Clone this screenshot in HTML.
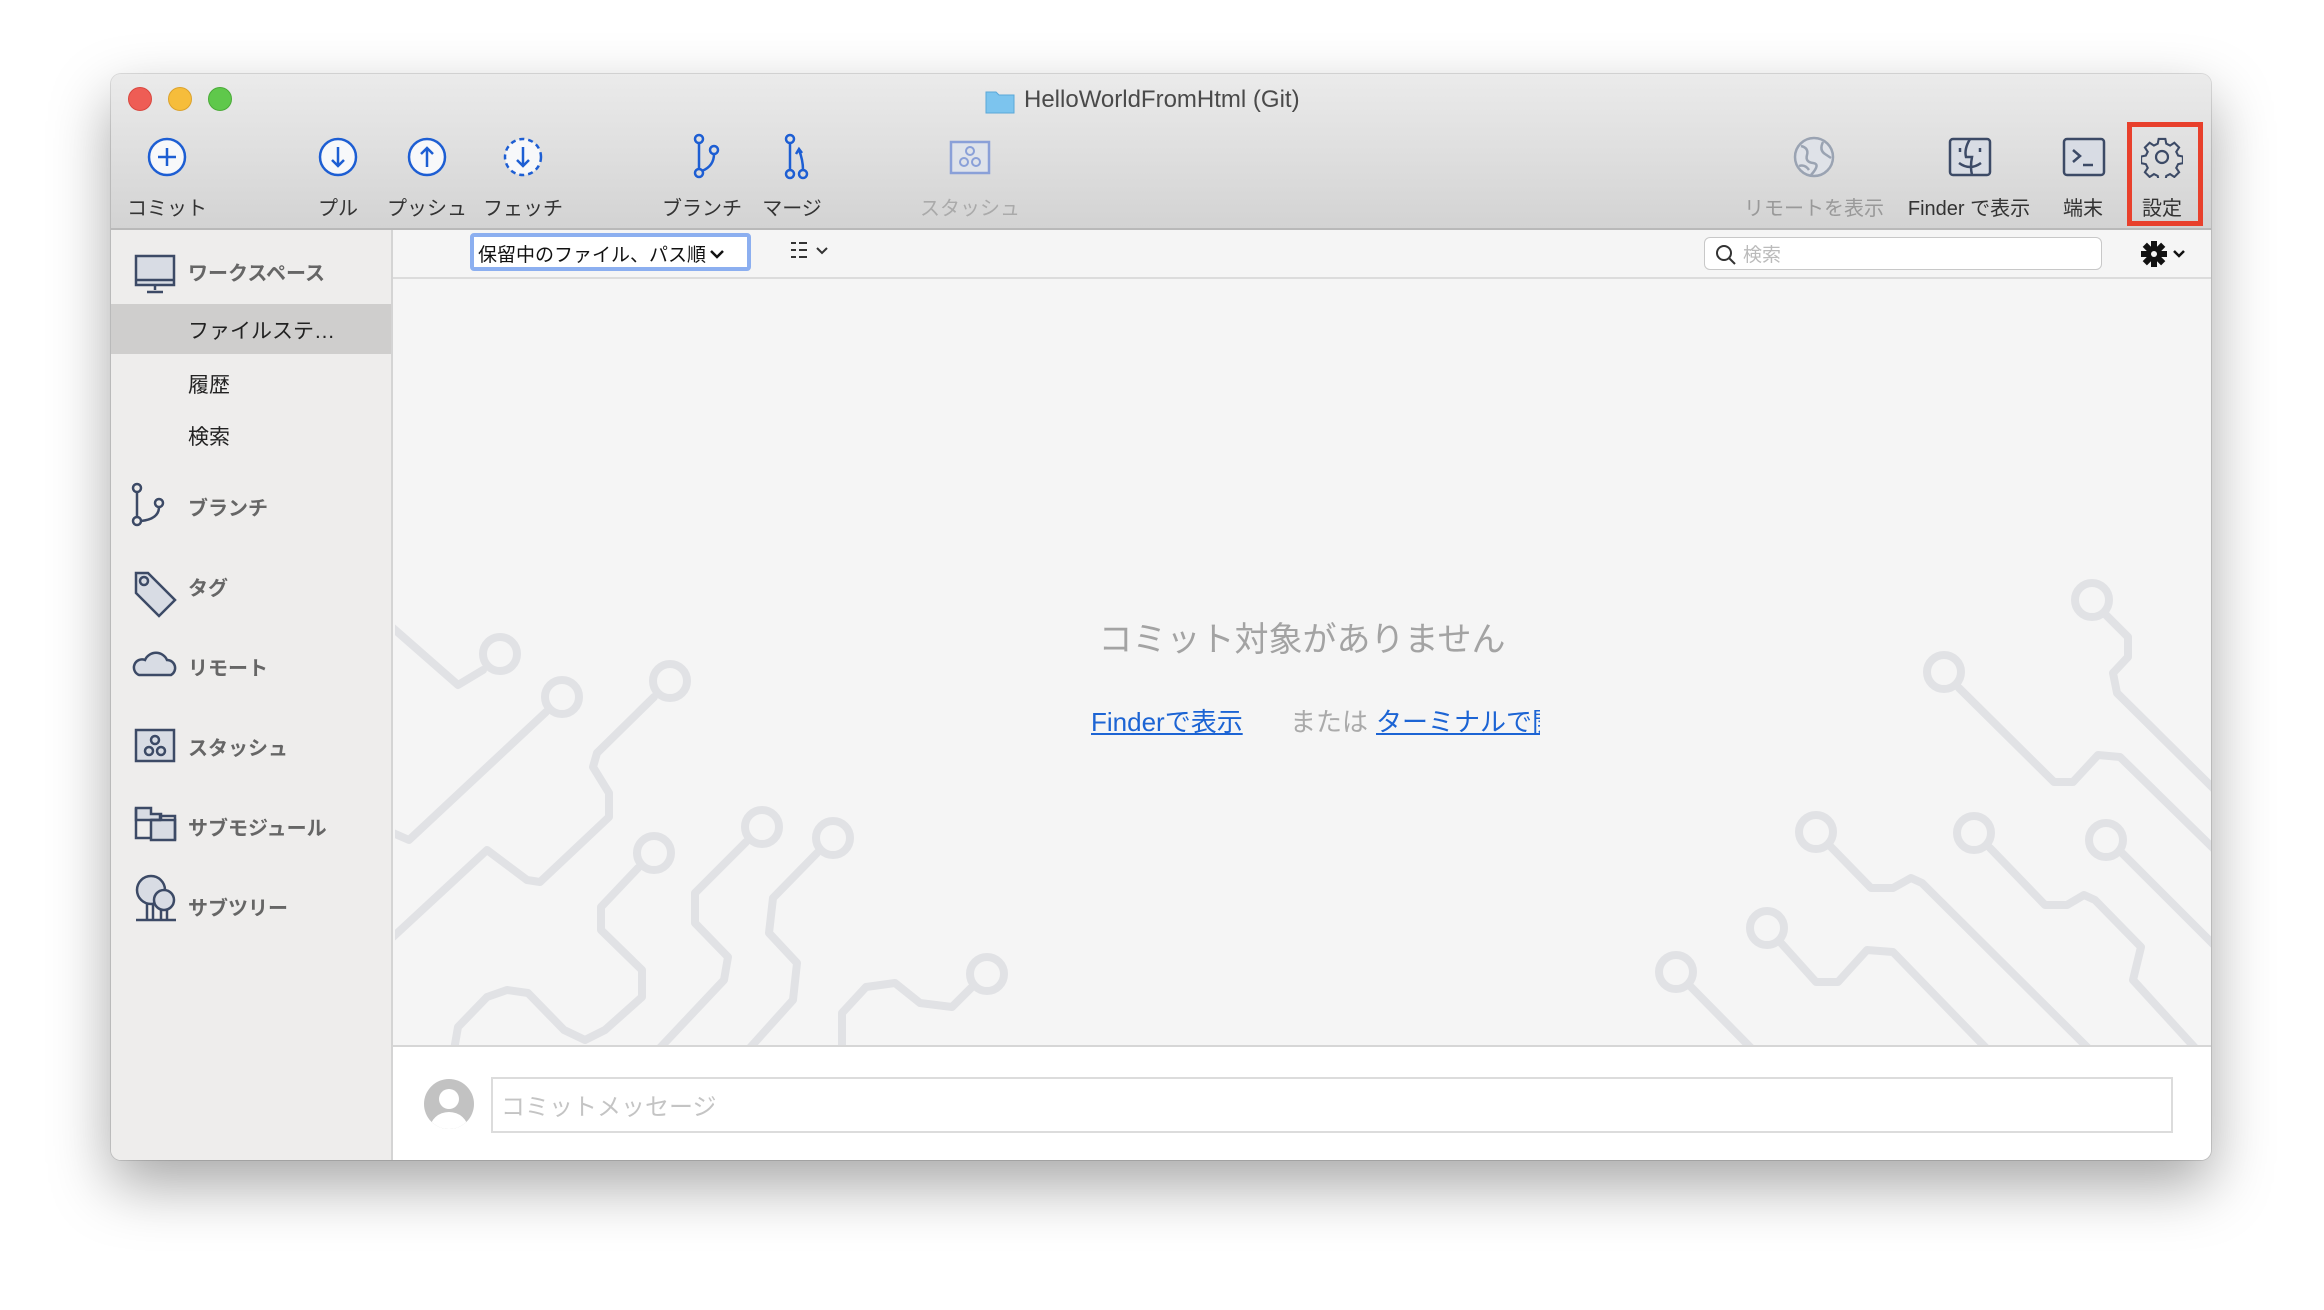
<!DOCTYPE html>
<html><head><meta charset="utf-8"><style>
*{margin:0;padding:0;box-sizing:border-box}
body{width:2324px;height:1310px;background:#fff;position:relative;overflow:hidden;font-family:"Liberation Sans","Noto Sans CJK JP",sans-serif}
.win{position:absolute;left:111px;top:74px;width:2100px;height:1086px;border-radius:10px;overflow:hidden;box-shadow:0 25px 60px rgba(0,0,0,.35),0 0 0 1px rgba(0,0,0,.12);background:#f5f5f5}
.tb{position:absolute;left:0;top:0;width:2100px;height:156px;background:linear-gradient(#ebebeb,#d3d3d3);border-bottom:2px solid #b9b9b9}
.a{position:absolute}
.lbl{position:absolute;font-size:20px;color:#333;transform:translateX(-50%);white-space:nowrap;top:118px}
.side{position:absolute;left:0;top:156px;width:282px;height:930px;background:#eeedec;border-right:2px solid #d4d4d4}
.si{position:absolute;font-size:20px;color:#666;font-weight:bold;left:77px}
.sub{position:absolute;font-size:21px;color:#222;left:77px}
</style></head><body>
<div class="win">
<div class="tb">
 <div class="a" style="left:17px;top:13px;width:24px;height:24px;border-radius:50%;background:#ee5d55;border:1px solid #d9473f"></div>
 <div class="a" style="left:57px;top:13px;width:24px;height:24px;border-radius:50%;background:#f6bd3b;border:1px solid #dca22c"></div>
 <div class="a" style="left:97px;top:13px;width:24px;height:24px;border-radius:50%;background:#5fc84b;border:1px solid #4aab38"></div>
 <svg class="a" style="left:873px;top:13px" width="32" height="28"><path d="M2 5h10l3 3h15v18H2z" fill="#7cc4ee" stroke="#5aa8d8"/></svg>
 <div class="a" style="left:913px;top:12px;font-size:24px;color:#4a4a4a">HelloWorldFromHtml (Git)</div>
 <svg class="a" style="left:0;top:0" width="2100" height="156" fill="none" stroke="#1d5ed3" stroke-width="2.5">
  <circle cx="56" cy="83" r="18" fill="#f7f8fa"/><path d="M56 74v18M47 83h18"/>
  <circle cx="227" cy="83" r="18" fill="#f7f8fa"/><path d="M227 73v19M221 86l6 6 6-6"/>
  <circle cx="316" cy="83" r="18" fill="#f7f8fa"/><path d="M316 93V74M310 80l6-6 6 6"/>
  <circle cx="412" cy="83" r="18" fill="#f7f8fa" stroke-dasharray="5 4"/><path d="M412 73v19M406 86l6 6 6-6"/>
  <circle cx="588" cy="65" r="4"/><circle cx="588" cy="99" r="4"/><circle cx="603" cy="76" r="4"/><path d="M588 69v26M603 80q0 12-12 17"/>
  <circle cx="679" cy="65" r="4"/><circle cx="679" cy="100" r="4"/><circle cx="692" cy="100" r="4"/><path d="M679 69v27M692 96q0-10-4-20M685 80l3-5 3 4"/>
  <rect x="840" y="68" width="38" height="31" fill="#dfe3ea" stroke="#8aa0d8"/><g stroke="#8aa0d8" stroke-width="2"><circle cx="859" cy="77" r="4"/><circle cx="853" cy="88" r="4"/><circle cx="865" cy="88" r="4"/></g>
  <g stroke="#9aa3b2" stroke-width="2.5"><circle cx="1703" cy="83" r="19" fill="#dfe2e8"/><path d="M1690 72q8 2 6 9t6 8-2 12M1712 68q-4 8 2 12t6 4M1688 92q6-2 10 4"/></g>
  <g stroke="#3c4a66" stroke-width="2.5"><rect x="1839" y="65" width="40" height="36" rx="3" fill="#d8dce4"/><path d="M1859 65q-6 10-4 18h6q-2 10 0 18M1849 74v4M1869 74v4M1848 89q11 8 22 0"/>
  <rect x="1953" y="65" width="40" height="36" rx="3" fill="#d8dce4"/><path d="M1962 76l7 6-7 6M1972 91h10"/></g>
 </svg>
 <svg class="a" style="left:2030px;top:62px" width="42" height="42" viewBox="-21 -21 42 42" fill="none" stroke="#3c4a66" stroke-width="2.2"><path d="M-3.5 -19h7l1 5 4 2 4.5-3 5 5-3 4.5 2 4 5 1v7l-5 1-2 4 3 4.5-5 5-4.5-3-4 2-1 5h-7l-1-5-4-2-4.5 3-5-5 3-4.5-2-4-5-1v-7l5-1 2-4-3-4.5 5-5 4.5 3 4-2z" transform="scale(.95)"/><circle r="6"/></svg>
 <div class="a" style="left:2016px;top:48px;width:76px;height:104px;border:5px solid #e8402c"></div>
 <div class="lbl" style="left:56px">コミット</div>
 <div class="lbl" style="left:227px">プル</div>
 <div class="lbl" style="left:316px">プッシュ</div>
 <div class="lbl" style="left:412px">フェッチ</div>
 <div class="lbl" style="left:591px">ブランチ</div>
 <div class="lbl" style="left:681px">マージ</div>
 <div class="lbl" style="left:859px;color:#aaa">スタッシュ</div>
 <div class="lbl" style="left:1703px;color:#999">リモートを表示</div>
 <div class="lbl" style="left:1858px">Finder で表示</div>
 <div class="lbl" style="left:1972px">端末</div>
 <div class="lbl" style="left:2051px">設定</div>
</div>
<!-- filter bar -->
<div class="a" style="left:282px;top:156px;width:1818px;height:49px;background:#f5f5f5;border-bottom:2px solid #dcdcdc"></div>
<div class="a" style="left:359px;top:159px;width:281px;height:38px;border:4px solid #8caff0;border-radius:4px;background:#fff;font-size:19px;color:#111;padding:3px 0 0 4px;white-space:nowrap">保留中のファイル、パス順<svg width="16" height="14" style="margin-left:3px"><path d="M2 4l6 6 6-6" fill="none" stroke="#111" stroke-width="2.5"/></svg></div>
<svg class="a" style="left:678px;top:166px" width="48" height="22" fill="none" stroke="#333" stroke-width="2"><path d="M2 3h5M10 3h8M2 10h5M10 10h8M2 17h5M10 17h8M28 8l5 5 5-5"/></svg>
<div class="a" style="left:1593px;top:163px;width:398px;height:33px;background:#fff;border:1px solid #c8c8c8;border-radius:6px"></div>
<svg class="a" style="left:1604px;top:170px" width="22" height="22" fill="none" stroke="#333" stroke-width="2"><circle cx="9" cy="9" r="7"/><path d="M14 14l6 6"/></svg>
<div class="a" style="left:1632px;top:166px;font-size:19px;color:#bbb">検索</div>
<svg class="a" style="left:2030px;top:166px" width="50" height="28" viewBox="0 0 50 28"><g transform="translate(13 14)" fill="#111"><circle r="8"/><rect x="-3" y="-13" width="6" height="26"/><rect x="-3" y="-13" width="6" height="26" transform="rotate(45)"/><rect x="-3" y="-13" width="6" height="26" transform="rotate(90)"/><rect x="-3" y="-13" width="6" height="26" transform="rotate(135)"/><circle r="3" fill="#f5f5f5"/></g><path d="M33 11l5 5 5-5" fill="none" stroke="#111" stroke-width="2.5"/></svg>
<!-- sidebar -->
<div class="side">
 <svg class="a" style="left:0;top:0" width="282" height="930" fill="none" stroke="#3c4a66" stroke-width="2.5">
  <rect x="25" y="26" width="38" height="29" fill="#d8dce4"/><path d="M25 50h38M44 55v5M36 62h16"/>
  <g transform="translate(0 70)">
  <circle cx="26" cy="188" r="4"/><circle cx="26" cy="221" r="4"/><circle cx="48" cy="203" r="4"/><path d="M26 192v25M48 207q0 12-18 14"/>
  <path d="M25 273h12l27 27-16 16-23-23z" fill="#d8dce4"/><circle cx="33" cy="281" r="4"/>
  <path d="M28 375h32a8 8 0 0 0-4-15 12 12 0 0 0-22 0 8 8 0 0 0-6 15z" fill="#d8dce4"/>
  <rect x="25" y="430" width="38" height="31" fill="#d8dce4"/><circle cx="44" cy="440" r="4"/><circle cx="38" cy="451" r="4"/><circle cx="50" cy="451" r="4"/>
  <path d="M25 508h15v6h10v6H25z" fill="#d8dce4"/><path d="M25 508v30h16" /><rect x="40" y="520" width="24" height="20" fill="#d8dce4"/><path d="M40 520h9v-4h15v24"/>
  <circle cx="40" cy="590" r="14" fill="#d8dce4"/><circle cx="53" cy="600" r="10" fill="#d8dce4"/><path d="M36 604v16M42 604v16M50 610v10M56 610v10M25 620h40"/>
  </g>
 </svg>
 <div class="si" style="top:27px">ワークスペース</div>
 <div class="a" style="left:0;top:74px;width:280px;height:50px;background:#cfcecd"></div>
 <div class="sub" style="top:85px">ファイルステ…</div>
 <div class="sub" style="top:139px">履歴</div>
 <div class="sub" style="top:191px">検索</div>
 <div class="si" style="top:262px">ブランチ</div>
 <div class="si" style="top:342px">タグ</div>
 <div class="si" style="top:422px">リモート</div>
 <div class="si" style="top:502px">スタッシュ</div>
 <div class="si" style="top:582px">サブモジュール</div>
 <div class="si" style="top:662px">サブツリー</div>
</div>
<!-- circuit -->
<svg class="a" style="left:-111px;top:-74px" width="2324" height="1310" fill="none" stroke="#e1e2e5" stroke-width="8" stroke-linejoin="round" stroke-linecap="round">
 <defs><clipPath id="c"><rect x="395" y="281" width="1816" height="764"/></clipPath></defs>
 <g clip-path="url(#c)">
 <circle cx="500" cy="654" r="17"/><polyline points="393,628 458,685 483,670"/>
 <circle cx="562" cy="697" r="17"/><polyline points="546,712 409,840 393,833"/>
 <circle cx="670" cy="681" r="17"/><polyline points="654,697 597,753 593,767 609,793 609,817 540,882 527,880 487,850 393,937"/>
 <circle cx="654" cy="853" r="17"/><polyline points="638,868 601,907 601,930 642,970 642,997 605,1030 585,1040 564,1030 528,993 507,990 487,997 458,1027 454,1050"/>
 <circle cx="762" cy="827" r="17"/><polyline points="746,842 695,893 695,923 728,957 724,980 658,1050"/>
 <circle cx="833" cy="838" r="17"/><polyline points="817,853 773,898 769,933 797,963 793,1000 748,1050"/>
 <circle cx="987" cy="974" r="17"/><polyline points="971,988 952,1007 920,1003 895,983 866,987 842,1013 842,1050"/>
 <circle cx="2092" cy="600" r="17"/><polyline points="2106,615 2128,637 2128,657 2113,673 2117,693 2215,790"/>
 <circle cx="1944" cy="672" r="17"/><polyline points="1959,688 2054,782 2073,782 2098,755 2120,757 2215,850"/>
 <circle cx="1816" cy="832" r="17"/><polyline points="1831,847 1871,888 1893,888 1911,878 1922,883 2090,1050"/>
 <circle cx="1974" cy="833" r="17"/><polyline points="1990,848 2045,905 2067,905 2084,895 2095,900 2141,947 2133,980 2197,1050"/>
 <circle cx="2106" cy="840" r="17"/><polyline points="2122,853 2215,946"/>
 <circle cx="1767" cy="928" r="17"/><polyline points="1781,943 1816,982 1838,982 1867,950 1893,952 1988,1050"/>
 <circle cx="1676" cy="972" r="17"/><polyline points="1691,987 1753,1050"/>
 </g>
</svg>
<div class="a" style="left:282px;top:538px;width:1818px;text-align:center;font-size:34px;color:#a3a3a3">コミット対象がありません</div>
<div class="a" style="left:980px;top:628px;font-size:26px;color:#1c64d4;text-decoration:underline;white-space:nowrap">Finderで表示</div>
<div class="a" style="left:1179px;top:628px;font-size:26px;color:#aaa">または</div>
<div class="a" style="left:1265px;top:628px;width:164px;overflow:hidden;font-size:26px;color:#1c64d4;text-decoration:underline;white-space:nowrap">ターミナルで開く</div>
<!-- commit -->
<div class="a" style="left:282px;top:971px;width:1818px;height:115px;background:#fff;border-top:2px solid #d6d6d6"></div>
<svg class="a" style="left:313px;top:1005px" width="50" height="50"><defs><clipPath id="av"><circle cx="25" cy="25" r="25"/></clipPath></defs><circle cx="25" cy="25" r="25" fill="#c2c2c2"/><g clip-path="url(#av)" fill="#fff"><circle cx="25" cy="20" r="10"/><ellipse cx="25" cy="50" rx="19" ry="17"/></g></svg>
<div class="a" style="left:380px;top:1003px;width:1682px;height:56px;border:2px solid #dcdcdc;background:#fff;font-size:24px;color:#c4c4c4;padding:8px 0 0 8px">コミットメッセージ</div>
</div>
</body></html>
